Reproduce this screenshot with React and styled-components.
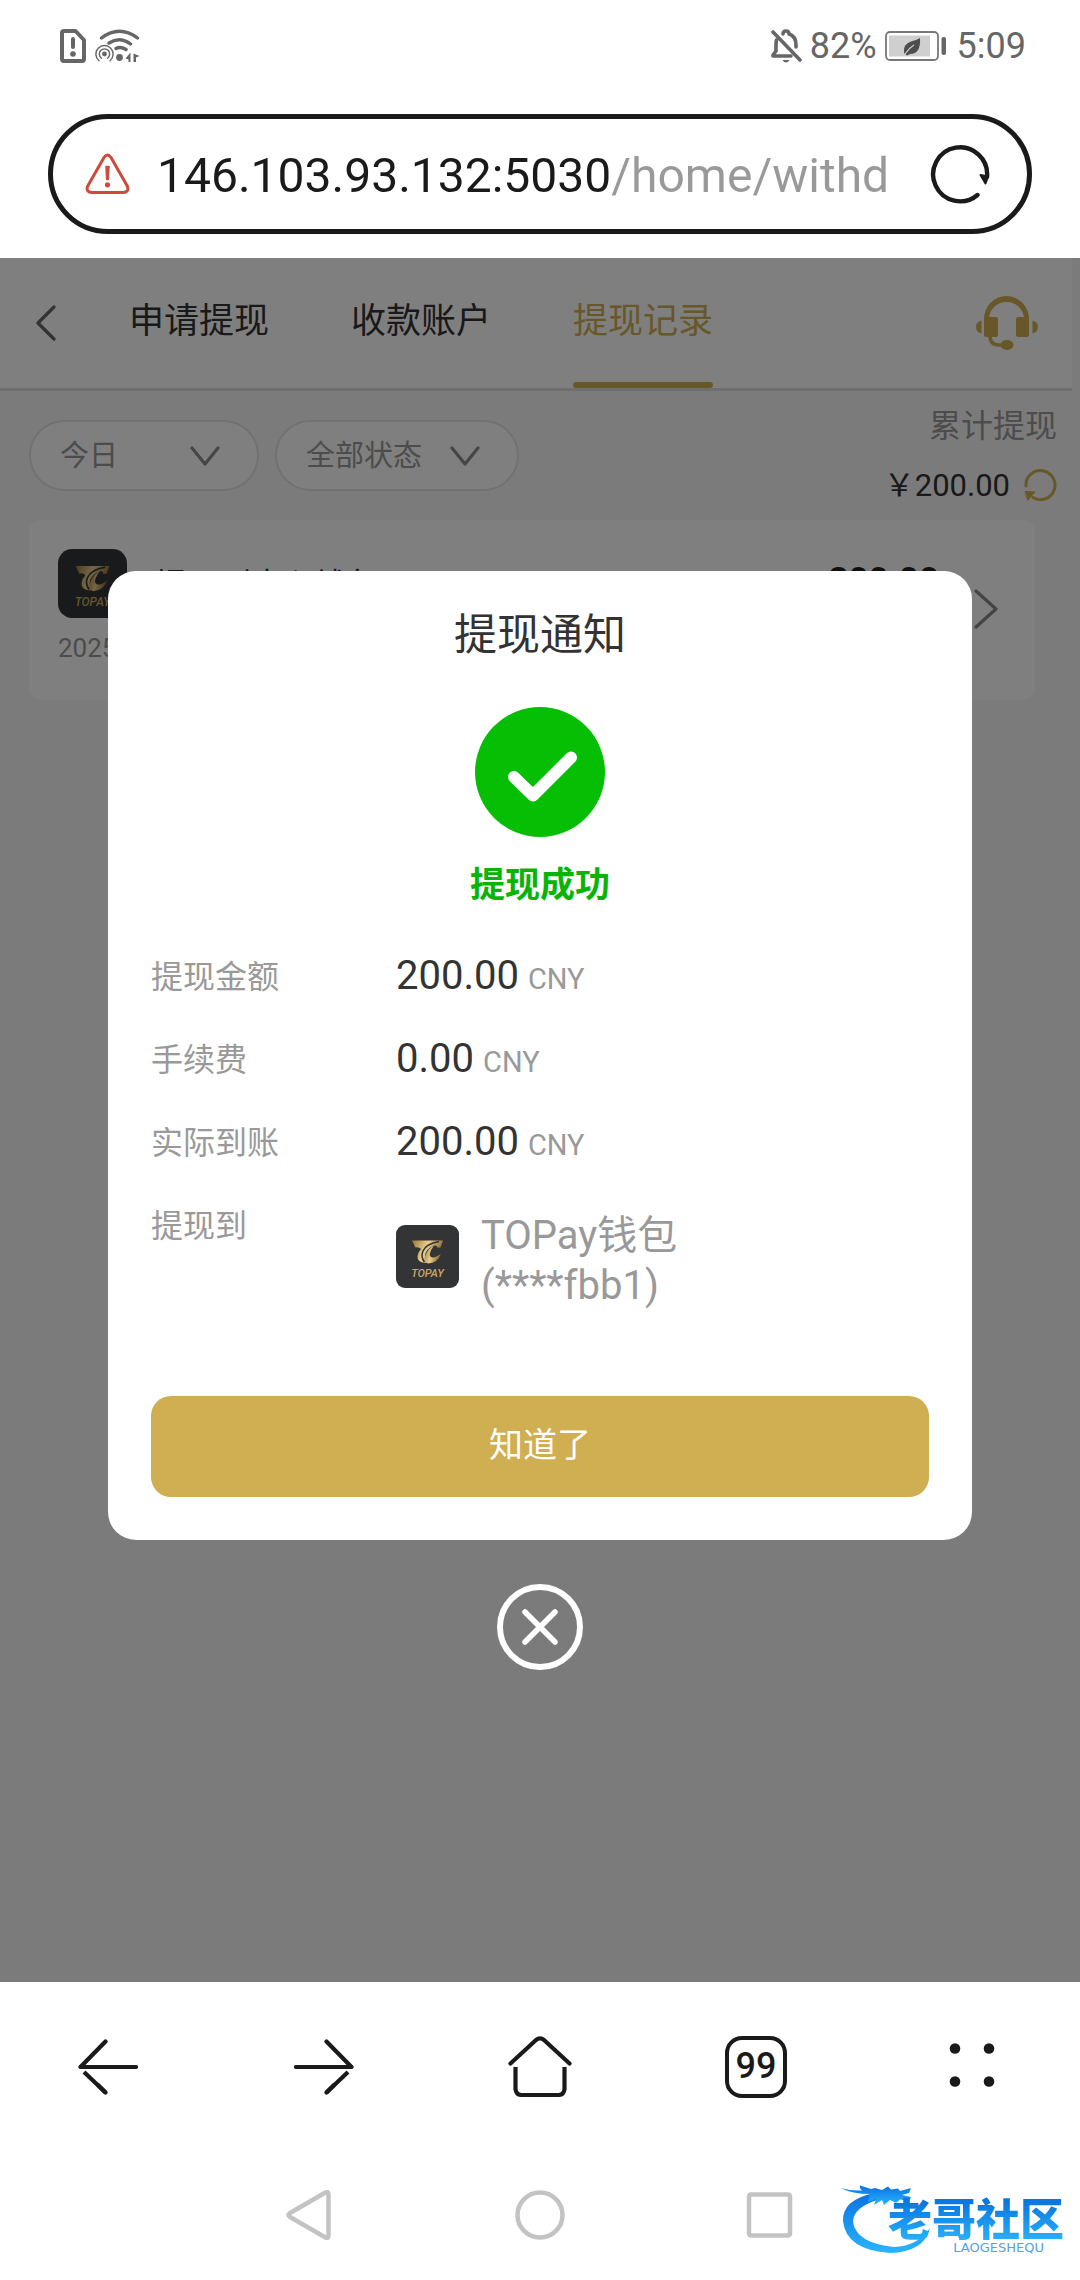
import React from "react";
import styled, { createGlobalStyle } from "styled-components";

const gold = "#d0ae52";
const ink = "#1a1a1a";
const text = "#333";
const muted = "#999";

const GlobalStyle = createGlobalStyle`
  * { box-sizing: border-box; }
  body {
    margin: 0;
    background: #fff;
    font-family: Roboto, "Noto Sans CJK SC", sans-serif;
    color: ${text};
  }
  button, input, select { font: inherit; color: inherit; }
  svg { display: block; flex: none; }
`;

const Screen = styled.div`
  display: flex;
  flex-direction: column;
  min-height: 100vh;
  position: relative;
`;

const PlainButton = styled.button`
  display: flex;
  align-items: center;
  justify-content: center;
  padding: 0;
  border: 0;
  background: none;
  cursor: pointer;
`;

/* ---------- status bar ---------- */

const StatusBar = styled.header`
  display: flex;
  align-items: center;
  justify-content: space-between;
  height: 92px;
  padding: 0 54px 0 60px;
  color: #666;
  font-size: 36px;
`;

const StatusGroup = styled.div`
  display: flex;
  align-items: center;
  gap: ${(p) => p.$gap}px;
`;

/* ---------- address bar ---------- */

const AddressBar = styled.form`
  display: flex;
  align-items: center;
  height: 120px;
  margin: 22px 48px 24px;
  padding: 0 37px 0 32px;
  border: 5px solid ${ink};
  border-radius: 60px;
`;

const AddressInput = styled.input`
  flex: 1;
  min-width: 0;
  height: 72px;
  margin: 0 30px 0 27px;
  padding: 2px 0 0;
  border: 0;
  outline: 0;
  font-size: 48px;
  color: ${ink};
  background: linear-gradient(90deg, ${ink} 454px, ${muted} 454px);
  -webkit-background-clip: text;
  background-clip: text;
  -webkit-text-fill-color: transparent;
`;

/* ---------- page ---------- */

const Page = styled.main`
  position: relative;
  flex: 1;
  background: #f7f7f7;
`;

const PageHeader = styled.div`
  display: flex;
  align-items: stretch;
  height: 133px;
  margin-right: 8px;
  padding-right: 34px;
  border-bottom: 3px solid #ddd;
  background: #fff;
`;

const BackButton = styled(PlainButton)`
  width: 129px;
  padding-left: 35px;
  justify-content: flex-start;
`;

const Tabs = styled.nav`
  display: flex;
  flex: 1;
  gap: 82px;
`;

const Tab = styled.button`
  display: flex;
  flex-direction: column;
  padding: 0;
  border: 0;
  background: none;
  color: ${(p) => (p.$active ? gold : text)};
  font-size: 35px;
  cursor: pointer;

  span {
    display: flex;
    flex: 1;
    align-items: center;
    padding-bottom: 5px;
  }

  &::after {
    content: "";
    height: 6px;
    align-self: stretch;
    border-radius: 3px;
    background: ${(p) => (p.$active ? gold : "transparent")};
  }
`;

const FilterBar = styled.div`
  display: flex;
  align-items: center;
  gap: 16px;
  height: 129px;
  padding: 0 23px 0 29px;
`;

const Filter = styled.label`
  display: grid;
  align-items: center;
  width: ${(p) => p.$width}px;
  height: 71px;
  border: 2px solid #e2e2e2;
  border-radius: 36px;
  background: #fff;

  select, svg { grid-area: 1 / 1; }
  svg { justify-self: end; margin-right: 37px; pointer-events: none; }
`;

const FilterSelect = styled.select`
  width: 100%;
  height: 100%;
  padding: 0 29px;
  border: 0;
  outline: 0;
  appearance: none;
  background: none;
  color: ${muted};
  font-size: 29px;
`;

const Totals = styled.div`
  display: flex;
  flex-direction: column;
  align-items: flex-end;
  margin-left: auto;
  font-size: 31px;
  line-height: 60px;
`;

const TotalsLabel = styled.span`
  font-size: 32px;
  color: ${muted};
`;

const TotalsValue = styled.div`
  display: flex;
  align-items: center;
  gap: 14px;
`;

const RecordCard = styled.a`
  display: flex;
  align-items: center;
  gap: 35px;
  margin: 0 45px 0 29px;
  padding: 29px 37px 32px 29px;
  border-radius: 12px;
  background: #fff;
  color: ${text};
  text-decoration: none;
`;

const RecordMain = styled.div`
  flex: 1;
`;

const RecordTop = styled.div`
  display: flex;
  align-items: center;
  gap: 28px;
  font-size: 32px;
`;

const RecordTitle = styled.span`
  padding-bottom: 4px;
`;

const RecordAmount = styled.strong`
  margin-left: auto;
  padding-bottom: 6px;
  font-size: 35px;
  font-weight: 700;
  color: #222;
`;

const RecordDate = styled.div`
  margin-top: 10px;
  font-size: 26px;
  line-height: 40px;
  color: ${muted};
`;

/* ---------- dialog ---------- */

const Overlay = styled.div`
  position: absolute;
  inset: 0;
  display: flex;
  flex-direction: column;
  align-items: center;
  justify-content: center;
  gap: 44px;
  background: rgba(0, 0, 0, 0.5);
`;

const Dialog = styled.section`
  display: flex;
  flex-direction: column;
  align-items: center;
  width: 80%;
  padding: 34px 43px 43px;
  border-radius: 28px;
  background: #fff;
`;

const DialogTitle = styled.h1`
  margin: 0 0 42px;
  font-size: 43px;
  font-weight: 400;
  line-height: 60px;
`;

const DialogStatus = styled.p`
  margin: 23px 0 40px;
  font-size: 35px;
  font-weight: 700;
  line-height: 52px;
  color: #08b408;
`;

const Details = styled.dl`
  display: grid;
  grid-template-columns: 245px 1fr;
  row-gap: 32px;
  align-self: stretch;
  margin: 0 0 85px;
`;

const Term = styled.dt`
  font-size: 32px;
  line-height: 51px;
  color: ${muted};
`;

const Value = styled.dd`
  display: flex;
  align-items: baseline;
  gap: 9px;
  margin: 0;
  font-size: 40px;
  line-height: 48px;
`;

const Unit = styled.span`
  font-size: 29px;
  line-height: 32px;
  color: ${muted};
`;

const Account = styled.dd`
  display: flex;
  align-items: center;
  gap: 22px;
  margin: 0;
  padding-top: 10px;
  font-size: 40px;
  line-height: 50px;
  color: ${muted};

  svg { margin-bottom: 8px; }
`;

const ConfirmButton = styled.button`
  align-self: stretch;
  height: 101px;
  padding-bottom: 8px;
  border: 0;
  border-radius: 20px;
  background: ${gold};
  color: #fff;
  font-size: 34px;
  cursor: pointer;
`;

const CloseButton = styled(PlainButton)`
  width: 86px;
  height: 86px;
  border: 6px solid #fff;
  border-radius: 50%;
`;

/* ---------- bottom bars ---------- */

const BrowserNav = styled.nav`
  display: grid;
  grid-template-columns: repeat(5, 1fr);
  height: 170px;
`;

const TabCount = styled.span`
  width: 62px;
  height: 62px;
  border: 4px solid ${ink};
  border-radius: 17px;
  font-size: 36px;
  font-weight: 500;
  line-height: 52px;
  text-align: center;
  color: ${ink};
`;

const SystemNav = styled.nav`
  display: flex;
  align-items: center;
  justify-content: center;
  gap: 180px;
  height: 128px;
  padding-bottom: 2px;
`;

const Watermark = styled.div`
  position: absolute;
  right: 16px;
  bottom: 24px;
  display: grid;
  width: 224px;
  height: 72px;

  > * { grid-area: 1 / 1; }
`;

const WatermarkText = styled.div`
  display: flex;
  flex-direction: column;
  align-items: flex-end;
  justify-content: flex-end;
`;

const WatermarkName = styled.strong`
  font-family: "Noto Sans CJK SC", sans-serif;
  font-size: 44px;
  font-weight: 900;
  line-height: 46px;
  color: #0f86e8;
  background: linear-gradient(#0a78e0 20%, #29b0fb);
  -webkit-background-clip: text;
  background-clip: text;
  -webkit-text-fill-color: transparent;
`;

const WatermarkLatin = styled.span`
  padding-right: 20px;
  font-family: "DejaVu Sans", sans-serif;
  font-size: 13px;
  line-height: 16px;
  color: #4fa3e8;
`;

/* ---------- drawings ---------- */

const line = { fill: "none", strokeLinecap: "round", strokeLinejoin: "round" };

const SimIcon = () => (
  <svg width="26" height="34" viewBox="0 0 26 34" {...line} stroke="#666" strokeWidth="4">
    <path d="M4 2H15.500L24 11V30Q24 32 22 32H4Q2 32 2 30V4Q2 2 4 2Z" />
    <path d="M13 10V18" />
    <circle cx="13" cy="25" r="2.800" fill="#666" stroke="none" />
  </svg>
);

const WifiIcon = () => (
  <svg width="46" height="34" viewBox="0 0 46 34" {...line} stroke="#666">
    <path d="M6.500 9Q24.500-4.500 42.500 9M14 14Q25 7 35.500 15M21 19.500Q25.500 17 31 20.500" strokeWidth="3.400" />
    <circle cx="24.500" cy="28.500" r="3.400" fill="#666" stroke="none" />
    <circle cx="9.500" cy="25" r="9.800" fill="#fff" stroke="none" />
    <circle cx="9.500" cy="25" r="2.400" fill="#666" stroke="none" />
    <path d="M6.500 29.300A5.200 5.200 0 1 1 12.500 29.300" strokeWidth="1.400" />
    <path d="M4 31.700A8.600 8.600 0 1 1 15 31.700" strokeWidth="1.400" />
    <path d="M35.500 23.500V33H33.500V30.500L30.500 29.500ZM38.500 33V24.500L44.500 27L41 28.500V33Z" fill="#666" stroke="none" />
  </svg>
);

const BellOffIcon = () => (
  <svg width="31" height="34" viewBox="0 0 31 34" {...line} stroke="#666" strokeWidth="3.600">
    <path d="M5.500 11Q5 13 5 16V22L2 26V27H20" />
    <path d="M12 5Q12 2 15 2T18 5Q25 7 25 16V18" />
    <path d="M2 3L29 31" />
    <path d="M11.500 31H18.500Q17 33.500 15 33.500T11.500 31Z" fill="#666" stroke="none" />
  </svg>
);

const BatteryIcon = () => (
  <svg width="64" height="30" viewBox="0 0 64 30">
    <rect x="1" y="1" width="52" height="28" rx="4" fill="#fff" stroke="#777" strokeWidth="1.800" />
    <rect x="4" y="4.500" width="41" height="21" fill="#cfcfcf" />
    <rect x="56.500" y="6" width="4.500" height="18" rx="2" fill="#666" />
    <path d="M35 7Q36 23 25 23L22 24.500L19 22Q18 13 26 10.500Q31 9.500 35 7Z" fill="#4d4d4d" />
    <path d="M20 23Q24 17 29 14" stroke="#cfcfcf" strokeWidth="1.200" fill="none" />
  </svg>
);

const WarningIcon = () => (
  <svg width="45" height="42" viewBox="0 0 45 42" {...line} stroke="#cf4a3c" strokeWidth="3">
    <path d="M19 4.500Q22.500-.500 26 4.500L42 32.500Q45 39 38 39.500H7Q0 39 3 32.500Z" />
    <path d="M21 13.500H24L23.300 26.500H21.700Z" fill="#cf4a3c" strokeWidth="1.500" />
    <circle cx="22.500" cy="31.800" r="2.600" fill="#cf4a3c" stroke="none" />
  </svg>
);

const ReloadIcon = () => (
  <svg width="60" height="60" viewBox="0 0 60 60" {...line} stroke={ink} strokeWidth="4.400">
    <path d="M47.500 51A27 27 0 1 1 57 33" />
    <path d="M50.500 31L58 32.500L55.500 39.500Z" fill={ink} strokeWidth="2" />
  </svg>
);

const Chevron = ({ dir, width, height, color }) => {
  const paths = {
    left: "M18 2L2 18L18 34",
    right: "M2 2L22 20L2 38",
    down: "M2 2L15 18L28 2",
  };
  const boxes = { left: "0 0 20 36", right: "0 0 24 40", down: "0 0 30 20" };
  return (
    <svg width={width} height={height} viewBox={boxes[dir]} {...line} stroke={color} strokeWidth="3.200">
      <path d={paths[dir]} />
    </svg>
  );
};

const HeadsetIcon = () => (
  <svg width="62" height="55" viewBox="0 0 62 55" fill={gold}>
    <path d="M8 25V23A22.500 23 0 0 1 53 23V25H48V23A17.500 17 0 0 0 13 23V25Z" />
    <rect x="8" y="21" width="14" height="20" rx="2" />
    <rect x="40" y="21" width="13" height="20" rx="2" />
    <path d="M5.500 24.500V37.500Q0 36 0 31T5.500 24.500ZM56.500 24.500V37.500Q62 36 62 31T56.500 24.500Z" />
    <path d="M14 40Q14 49 23 49H30" fill="none" stroke={gold} strokeWidth="3.500" />
    <ellipse cx="31" cy="49" rx="6.500" ry="5" />
  </svg>
);

const RefreshIcon = () => (
  <svg width="33" height="33" viewBox="0 0 33 33" {...line} stroke={gold} strokeWidth="3">
    <path d="M2 17A14.500 14.500 0 1 1 9 28.500" />
    <path d="M1.500 22.500L11 23L4 31Z" fill={gold} strokeWidth="1" />
  </svg>
);

const LogoIcon = ({ size, radius, id }) => (
  <svg width={size} height={size} viewBox="0 0 63 63">
    <defs>
      <linearGradient id={id} x1="0" y1="0" x2="1" y2="0.300">
        <stop offset="0" stopColor="#9a7638" />
        <stop offset="0.500" stopColor="#e9cf8d" />
        <stop offset="1" stopColor="#8a6b35" />
      </linearGradient>
    </defs>
    <rect width="63" height="63" rx={radius} fill="#333436" />
    <path d="M16 15.500H47L44.500 22.500H41Q42 20 38 20.500Q30 24 29 30Q28.500 35 32 37.500L29 38Q21 37 21.500 31Q22 27 25 24Q23 21.500 19.500 22.500Z" fill={`url(#${id})`} />
    <path d="M45 28.500Q42 38 32 38.500Q27 36.500 29.500 30Q31.500 24 38 20.500Q33 27 34 31Q37 35 45 28.500Z" fill={`url(#${id})`} />
    <path d="M43 16.500Q30 19 27 26Q24.500 32 28.500 37" fill="none" stroke="#333436" strokeWidth="1.500" />
    <text
      x="31.500"
      y="52"
      textAnchor="middle"
      fontFamily="Roboto, sans-serif"
      fontSize="11"
      fontWeight="500"
      fontStyle="italic"
      fill="#c9a862"
    >
      TOPAY
    </text>
  </svg>
);

const SuccessIcon = () => (
  <svg width="130" height="130" viewBox="0 0 130 130" {...line}>
    <circle cx="65" cy="65" r="65" fill="#06bf04" />
    <path d="M39 70L58 88.500L96 50.500" stroke="#fff" strokeWidth="12" />
  </svg>
);

const CloseIcon = () => (
  <svg width="36" height="36" viewBox="0 0 36 36" {...line} stroke="#fff" strokeWidth="5.500">
    <path d="M3 3L33 33M33 3L3 33" />
  </svg>
);

const ArrowLeftIcon = () => (
  <svg width="60" height="56" viewBox="0 0 60 56" {...line} stroke={ink} strokeWidth="4.200">
    <path d="M27.500 2.500L2.500 28H58" />
    <path d="M27.500 53.500L6 33" strokeLinecap="butt" />
    <path d="M27.500 53.500L20 46" />
  </svg>
);

const ArrowRightIcon = () => (
  <svg width="60" height="56" viewBox="0 0 60 56" {...line} stroke={ink} strokeWidth="4.200">
    <path d="M32.500 2.500L57.500 28H2" />
    <path d="M32.500 53.500L54 33" strokeLinecap="butt" />
    <path d="M32.500 53.500L40 46" />
  </svg>
);

const HomeIcon = () => (
  <svg width="64" height="62" viewBox="0 0 64 62" {...line} stroke={ink} strokeWidth="4.200">
    <path d="M2.500 27.500L28 4Q32 .800 36 4L61.500 27.500" />
    <path d="M7.500 31V53Q8 58.500 13 59H51Q56 58.500 56.500 53V31" strokeLinecap="butt" />
  </svg>
);

const MenuIcon = () => (
  <svg width="46" height="48" viewBox="0 0 46 48" fill={ink}>
    <circle cx="6" cy="5.500" r="5.300" />
    <circle cx="40" cy="5.500" r="5.300" />
    <circle cx="6" cy="38.500" r="5.300" />
    <circle cx="40" cy="38.500" r="5.300" />
  </svg>
);

const SystemIcon = ({ children }) => (
  <svg width="50" height="50" viewBox="0 0 50 50" {...line} stroke="#c3c3c3" strokeWidth="4.500">
    {children}
  </svg>
);

const DragonIcon = () => (
  <svg width="224" height="72" viewBox="0 0 224 72">
    <defs>
      <linearGradient id="dragon" x1="0" y1="0" x2="0" y2="1">
        <stop offset="0" stopColor="#0a72e0" />
        <stop offset="1" stopColor="#2ab4ff" />
      </linearGradient>
    </defs>
    <g fill="url(#dragon)">
      <path d="M34 9Q2 16 3 37Q6 66 50 69Q84 68 90 44Q78 62 54 63Q16 59 13 38Q13 23 40 15Z" />
      <path d="M1 4Q10 7 22 6.500Q19 4 20 1.500L31 5L35 4L42 6L48 2.500L51 5.500L58 4.500L60 7L71 4L69 9L62 11L71 13L69 17L60 15.500L56 19L50 16L44 21L42 16L34 21L36 15L28 18L30 10Q12 10 1 4Z" />
    </g>
  </svg>
);

/* ---------- screen ---------- */

const amounts = [
  { label: "提现金额", value: "200.00" },
  { label: "手续费", value: "0.00" },
  { label: "实际到账", value: "200.00" },
];

const tabs = ["申请提现", "收款账户", "提现记录"];

export default function App() {
  return (
    <Screen>
      <GlobalStyle />

      <StatusBar>
        <StatusGroup $gap={9}>
          <SimIcon />
          <WifiIcon />
        </StatusGroup>
        <StatusGroup $gap={8}>
          <BellOffIcon />
          <span>82%</span>
          <BatteryIcon />
          <span>5:09</span>
        </StatusGroup>
      </StatusBar>

      <AddressBar onSubmit={(e) => e.preventDefault()}>
        <WarningIcon />
        <AddressInput
          type="text"
          aria-label="网址"
          defaultValue="146.103.93.132:5030/home/withd"
        />
        <PlainButton type="button" aria-label="刷新">
          <ReloadIcon />
        </PlainButton>
      </AddressBar>

      <Page>
        <PageHeader>
          <BackButton type="button" aria-label="返回">
            <Chevron dir="left" width={22} height={36} color="#666" />
          </BackButton>
          <Tabs>
            {tabs.map((name) => (
              <Tab key={name} type="button" $active={name === "提现记录"}>
                <span>{name}</span>
              </Tab>
            ))}
          </Tabs>
          <PlainButton type="button" aria-label="客服">
            <HeadsetIcon />
          </PlainButton>
        </PageHeader>

        <FilterBar>
          <Filter $width={230}>
            <FilterSelect aria-label="日期">
              <option>今日</option>
            </FilterSelect>
            <Chevron dir="down" width={30} height={20} color="#8c8c8c" />
          </Filter>
          <Filter $width={244}>
            <FilterSelect aria-label="状态">
              <option>全部状态</option>
            </FilterSelect>
            <Chevron dir="down" width={30} height={20} color="#8c8c8c" />
          </Filter>
          <Totals>
            <TotalsLabel>累计提现</TotalsLabel>
            <TotalsValue>
              <span>￥200.00</span>
              <PlainButton type="button" aria-label="更新">
                <RefreshIcon />
              </PlainButton>
            </TotalsValue>
          </Totals>
        </FilterBar>

        <RecordCard href="#record">
          <RecordMain>
            <RecordTop>
              <LogoIcon size={69} radius={13} id="logo-record" />
              <RecordTitle>提现到中心钱包</RecordTitle>
              <RecordAmount>200.00</RecordAmount>
            </RecordTop>
            <RecordDate>2025</RecordDate>
          </RecordMain>
          <Chevron dir="right" width={24} height={40} color="#888" />
        </RecordCard>

        <Overlay>
          <Dialog role="dialog" aria-labelledby="dialog-title">
            <DialogTitle id="dialog-title">提现通知</DialogTitle>
            <SuccessIcon />
            <DialogStatus>提现成功</DialogStatus>
            <Details>
              {amounts.map(({ label, value }) => (
                <React.Fragment key={label}>
                  <Term>{label}</Term>
                  <Value>
                    {value}
                    <Unit>CNY</Unit>
                  </Value>
                </React.Fragment>
              ))}
              <Term>提现到</Term>
              <Account>
                <LogoIcon size={63} radius={9} id="logo-account" />
                <span>
                  TOPay钱包
                  <br />
                  (****fbb1)
                </span>
              </Account>
            </Details>
            <ConfirmButton type="button">知道了</ConfirmButton>
          </Dialog>
          <CloseButton type="button" aria-label="关闭">
            <CloseIcon />
          </CloseButton>
        </Overlay>
      </Page>

      <BrowserNav>
        <PlainButton type="button" aria-label="后退">
          <ArrowLeftIcon />
        </PlainButton>
        <PlainButton type="button" aria-label="前进">
          <ArrowRightIcon />
        </PlainButton>
        <PlainButton type="button" aria-label="主页">
          <HomeIcon />
        </PlainButton>
        <PlainButton type="button" aria-label="标签页">
          <TabCount>99</TabCount>
        </PlainButton>
        <PlainButton type="button" aria-label="菜单">
          <MenuIcon />
        </PlainButton>
      </BrowserNav>

      <SystemNav>
        <PlainButton type="button" aria-label="系统返回">
          <SystemIcon>
            <path d="M43.500 4.500Q43.500 1 40.500 2.500L5 23Q2 25 5 27L40.500 47.500Q43.500 49 43.500 45.500Z" />
          </SystemIcon>
        </PlainButton>
        <PlainButton type="button" aria-label="系统主页">
          <SystemIcon>
            <circle cx="25" cy="25" r="22.500" />
          </SystemIcon>
        </PlainButton>
        <PlainButton type="button" aria-label="最近任务">
          <SystemIcon>
            <rect x="4" y="4.500" width="41" height="41" rx="2" />
          </SystemIcon>
        </PlainButton>
      </SystemNav>

      <Watermark>
        <DragonIcon />
        <WatermarkText>
          <WatermarkName>老哥社区</WatermarkName>
          <WatermarkLatin>LAOGESHEQU</WatermarkLatin>
        </WatermarkText>
      </Watermark>
    </Screen>
  );
}
